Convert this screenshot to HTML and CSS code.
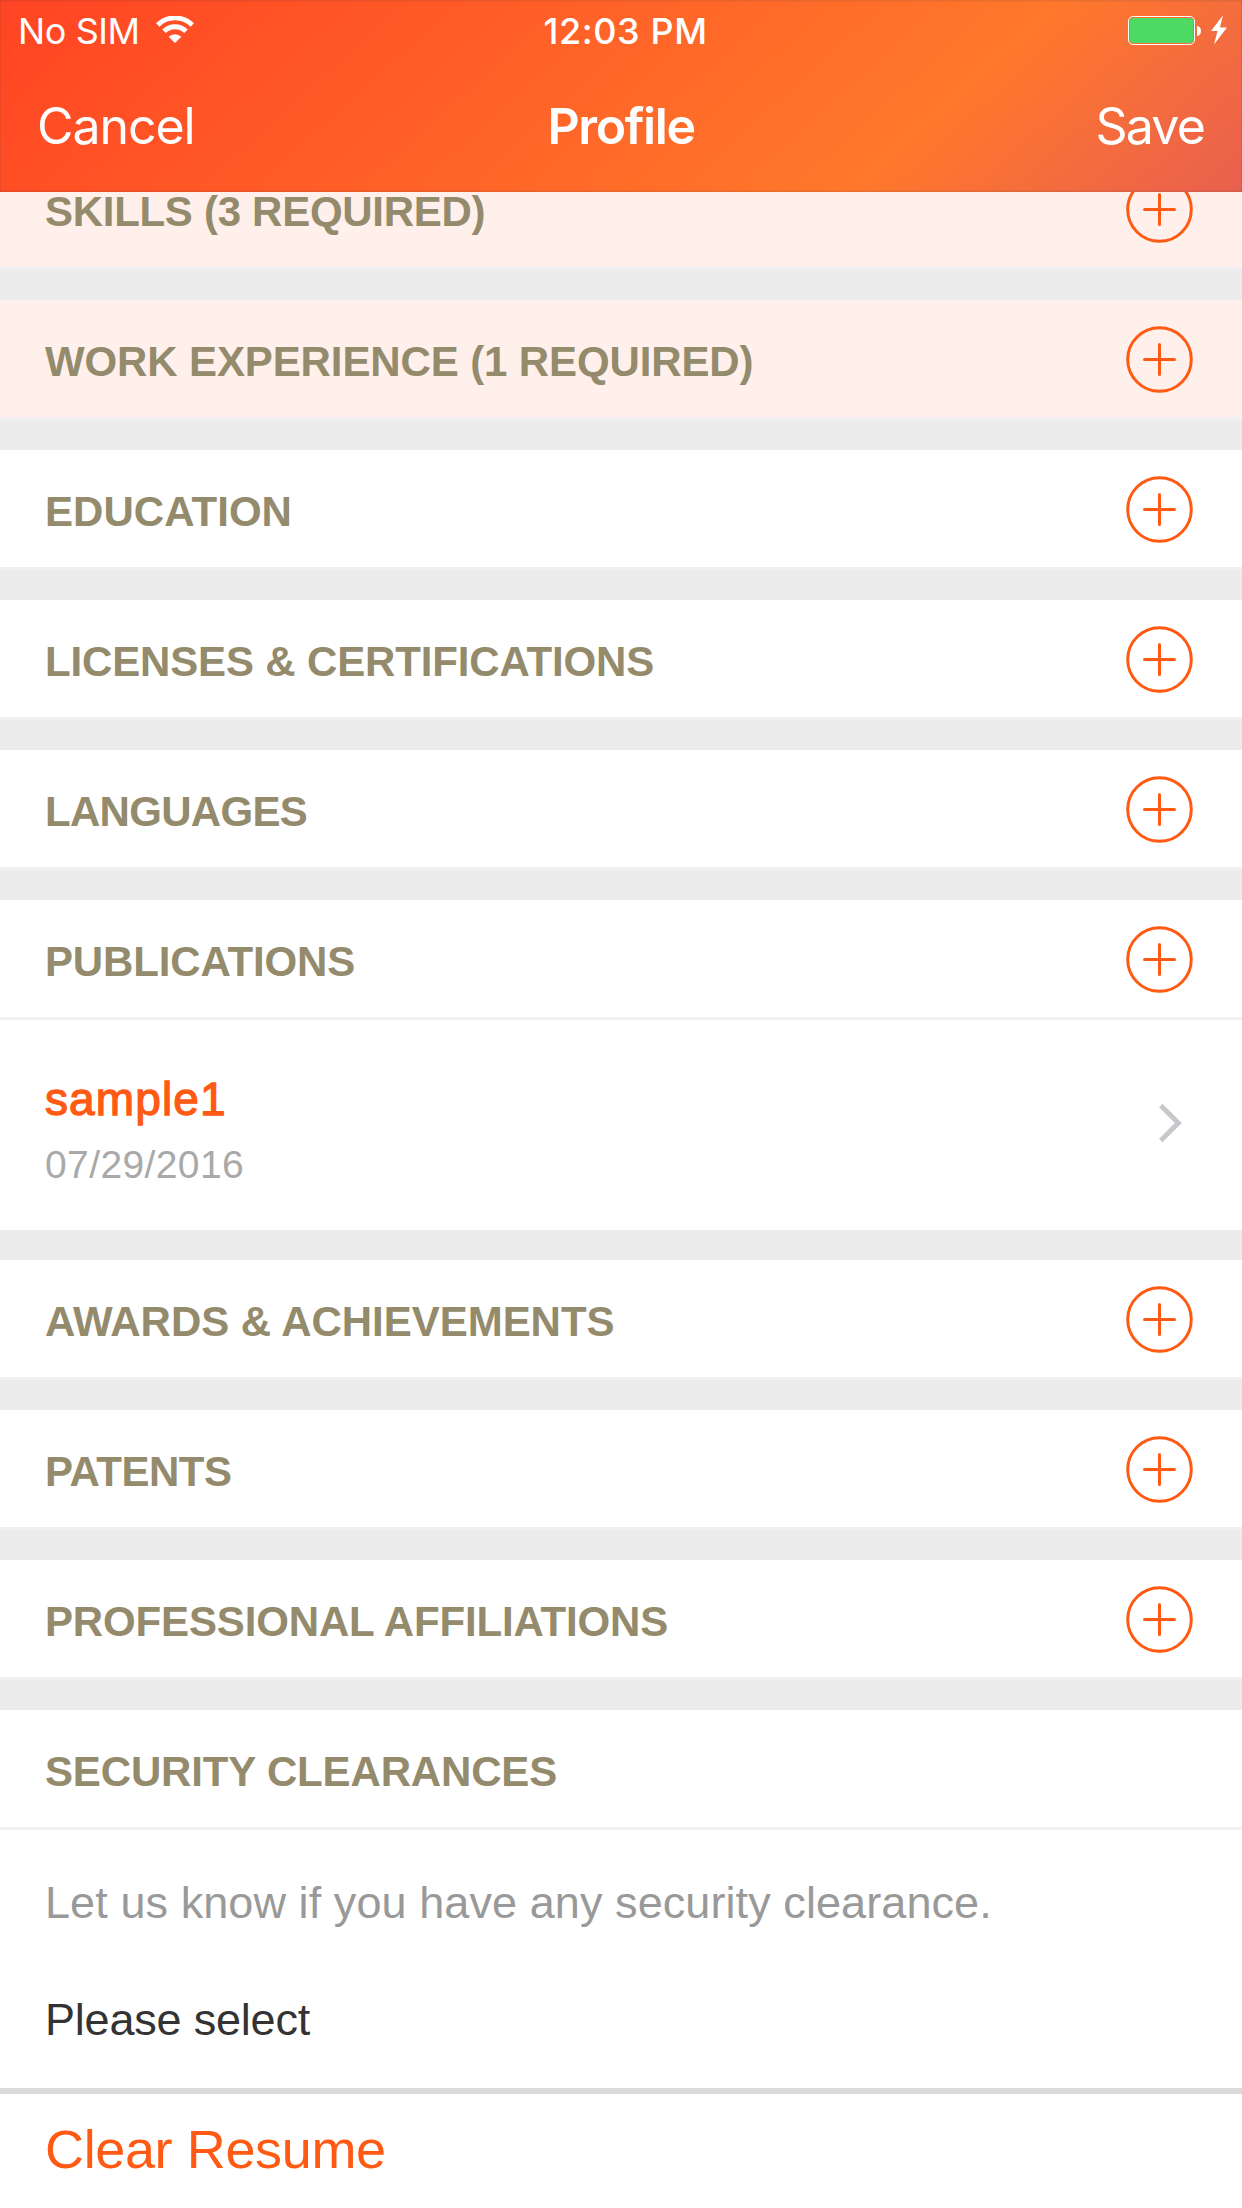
FILE: index.html
```
<!DOCTYPE html>
<html lang="en">
<head>
<meta charset="utf-8">
<title>Profile</title>
<link rel="stylesheet" href="styles.css">
</head>
<body>
<svg class="defs" aria-hidden="true">
  <symbol id="add" viewBox="0 0 67 67">
    <circle cx="33.5" cy="33.5" r="31.8" fill="none" stroke="currentColor" stroke-width="3"/>
    <path d="M18.5 33.5h30M33.5 18.5v30" fill="none" stroke="currentColor" stroke-width="3" stroke-linecap="round"/>
  </symbol>
</svg>
<div class="screen">
  <header class="header">
    <div class="status">
      <div class="carrier">
        <span class="carrier-name">No SIM</span>
        <svg class="wifi" width="38" height="28" viewBox="0 0 38 28">
          <g fill="none" stroke="#fff" stroke-width="4.8">
            <path d="M1.8 9a24.3 24.3 0 0 1 34.400 0"/>
            <path d="M8 15.300a15.600 15.600 0 0 1 22 0"/>
          </g>
          <path d="M19 27l-6.300-6.300a9 9 0 0 1 12.600 0z" fill="#fff"/>
        </svg>
      </div>
      <span class="clock">12:03 PM</span>
      <div class="power">
        <svg width="100" height="30" viewBox="0 0 100 30">
          <rect x=".5" y="1.500" width="66" height="28" rx="4.500" fill="none" stroke="#fff"/>
          <rect x="2" y="3" width="63" height="25" rx="3" fill="#4cd964"/>
          <path d="M69 11c5.300 0 5.300 10 0 10z" fill="#fff"/>
          <path d="M95 .3L83 16h6.500L86 29.500 99 12.500h-7z" fill="#fff"/>
        </svg>
      </div>
    </div>
    <nav class="nav">
      <span class="cancel">Cancel</span>
      <h1 class="title">Profile</h1>
      <span class="save">Save</span>
    </nav>
  </header>
  <main class="sections">
    <section class="section required"><h2 class="skills">SKILLS (3 REQUIRED)</h2><svg class="add"><use href="#add"/></svg></section>
    <section class="section required"><h2 class="work">WORK EXPERIENCE (1 REQUIRED)</h2><svg class="add"><use href="#add"/></svg></section>
    <section class="section"><h2 class="education">EDUCATION</h2><svg class="add"><use href="#add"/></svg></section>
    <section class="section"><h2>LICENSES &amp; CERTIFICATIONS</h2><svg class="add"><use href="#add"/></svg></section>
    <section class="section"><h2 class="languages">LANGUAGES</h2><svg class="add"><use href="#add"/></svg></section>
    <div class="group">
      <section class="section"><h2>PUBLICATIONS</h2><svg class="add"><use href="#add"/></svg></section>
      <article class="entry">
        <div>
          <h3 class="entry-title">sample1</h3>
          <p class="entry-date">07/29/2016</p>
        </div>
        <svg class="chevron" width="24" height="40" viewBox="0 0 24 40"><path d="M1.800 2.500L19.300 20 1.800 37.500" fill="none" stroke="#c7c7cc" stroke-width="5"/></svg>
      </article>
    </div>
    <section class="section"><h2 class="awards">AWARDS &amp; ACHIEVEMENTS</h2><svg class="add"><use href="#add"/></svg></section>
    <section class="section"><h2 class="patents">PATENTS</h2><svg class="add"><use href="#add"/></svg></section>
    <section class="section"><h2>PROFESSIONAL AFFILIATIONS</h2><svg class="add"><use href="#add"/></svg></section>
    <div class="group">
      <section class="section"><h2>SECURITY CLEARANCES</h2></section>
      <div class="clearance">
        <p class="hint">Let us know if you have any security clearance.</p>
        <p class="select">Please select</p>
      </div>
    </div>
  </main>
  <footer class="footer">Clear Resume</footer>
</div>
</body>
</html>
```
FILE: styles.css
```
* { box-sizing: border-box; }

body {
  margin: 0;
  background: #fff;
  font-family: "Liberation Sans", Arial, sans-serif;
}

h1, h2, h3, p { margin: 0; font-weight: 400; }

.defs { display: none; }

.screen {
  display: flex;
  flex-direction: column;
  width: 1242px;
  height: 2208px;
  overflow: hidden;
}

.header {
  flex: none;
  height: 192px;
  color: #fff;
  font-family: Inter, sans-serif;
  background: linear-gradient(138deg, #ff4423 0%, #ff782b 73%, #e9604f 100%);
  box-shadow: inset 0 2px rgba(40, 40, 60, .08), inset 0 -2px rgba(40, 40, 60, .08),
    inset 1px 0 rgba(40, 40, 60, .08), inset -1px 0 rgba(40, 40, 60, .08);
}

.status, .nav {
  display: grid;
  grid-template-columns: 1fr auto 1fr;
  align-items: center;
}

.status { height: 62px; font-size: 36px; line-height: 62px; }
.carrier { display: flex; align-items: center; gap: 16px; padding-left: 18px; }
.carrier-name { letter-spacing: -.4px; }
.wifi { margin-top: -3px; }
.clock { margin-left: 9px; font-weight: 500; letter-spacing: .6px; }
.power { display: flex; justify-content: flex-end; padding-right: 14px; margin-top: -2px; }
.power svg { display: block; }

.nav { height: 128px; font-size: 50px; line-height: 128px; }
.cancel { padding-left: 37px; letter-spacing: -1.05px; }
.title { font-size: 50px; font-weight: 600; letter-spacing: -1.4px; }
.save { justify-self: end; padding-right: 38px; letter-spacing: -1.8px; }

/* The list is scrolled, so its first row starts under the header. */
.sections {
  flex: none;
  display: flex;
  flex-direction: column;
  justify-content: flex-end;
  gap: 30px;
  height: 1896px;
  overflow: hidden;
  background: #ececec;
}

.section {
  flex: none;
  display: flex;
  justify-content: space-between;
  align-items: center;
  height: 120px;
  padding: 0 49px 0 45px;
  border-bottom: 3px solid #efeff4;
  background: #fff;
}

.required { background: #fff0eb; }

.section h2 {
  padding-top: 6px;
  color: #948a6c;
  font-size: 42px;
  font-weight: 700;
  line-height: 38px;
  letter-spacing: -.15px;
  white-space: nowrap;
}

.section .skills { letter-spacing: -.29px; }
.section .work { letter-spacing: -.12px; }
.section .education { letter-spacing: .05px; }
.section .languages { letter-spacing: -.7px; }
.section .awards { letter-spacing: -.03px; }
.section .patents { letter-spacing: -.45px; }

.add { width: 67px; height: 67px; margin-top: 2px; color: #ff5a13; }

.entry {
  display: flex;
  justify-content: space-between;
  height: 210px;
  padding: 49px 59px 0 45px;
  background: #fff;
}

.entry-title {
  color: #ff5a13;
  font-size: 46px;
  line-height: 60px;
  letter-spacing: 1.1px;
  -webkit-text-stroke: 1.3px #ff5a13;
}

.entry-date {
  padding-top: 6px;
  color: #a9a9a9;
  font-size: 39px;
  line-height: 60px;
  letter-spacing: .39px;
}

.chevron { margin-top: 34px; }

.clearance {
  height: 258px;
  padding: 43px 45px 0;
  background: #fff;
  font-size: 45px;
  line-height: 60px;
}

.hint { color: #999; letter-spacing: .08px; }
.select { padding-top: 57px; color: #333; letter-spacing: -.2px; }

.footer {
  flex: 1;
  padding-left: 45px;
  border-top: 6px solid #dadada;
  background: #fff;
  color: #ff5a13;
  font-size: 54px;
  line-height: 110px;
  letter-spacing: -.37px;
}
```
